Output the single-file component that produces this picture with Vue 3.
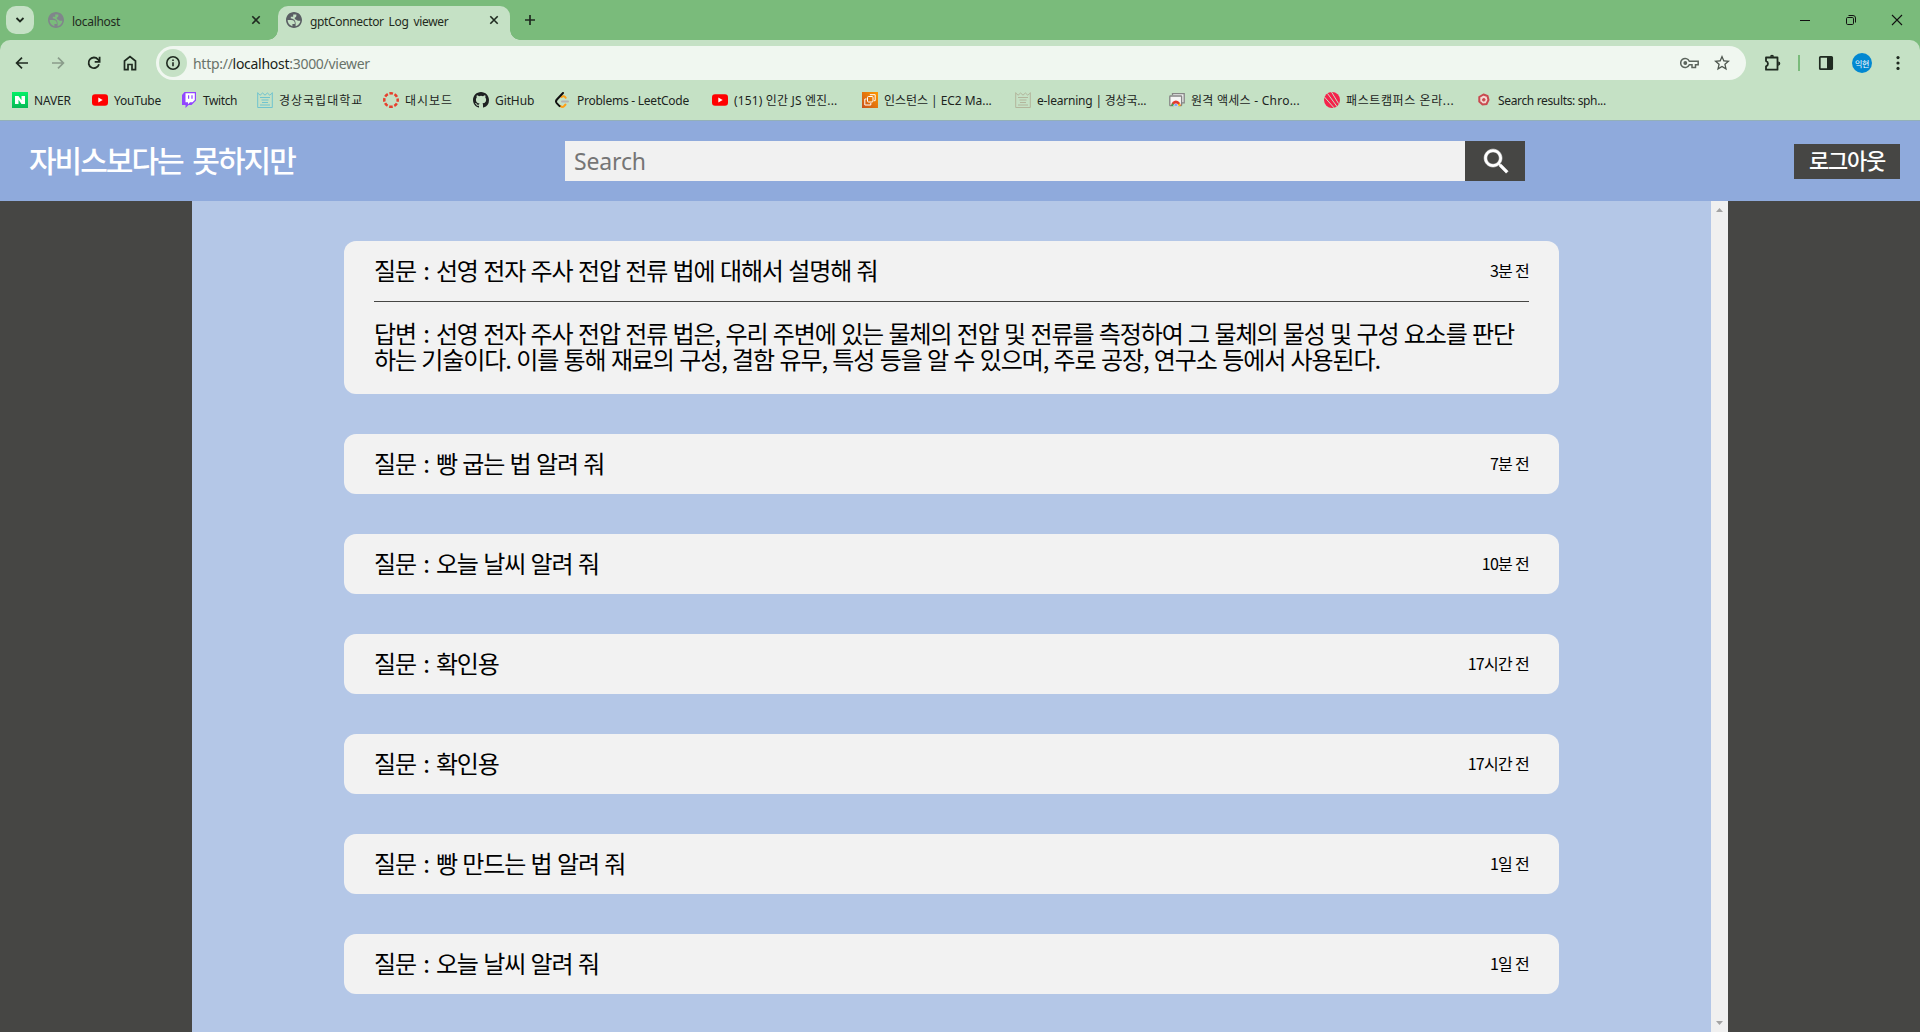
<script setup>
const bookmarks = [
  { icon: 'naver', label: 'NAVER', width: 80, ls: -0.2 },
  { icon: 'youtube', label: 'YouTube', width: 89, ls: -0.2 },
  { icon: 'twitch', label: 'Twitch', width: 76, ls: -0.4 },
  { icon: 'gnu', label: '경상국립대학교', width: 126, ls: 1, color: '#6fc3cf' },
  { icon: 'canvas', label: '대시보드', width: 90, ls: 1 },
  { icon: 'github', label: 'GitHub', width: 82, ls: -0.1 },
  { icon: 'leetcode', label: 'Problems - LeetCode', width: 157, ls: -0.25 },
  { icon: 'youtube', label: '(151) 인간 JS 엔진...', width: 150, ls: 0.15 },
  { icon: 'ec2', label: '인스턴스 | EC2 Ma...', width: 153, ls: -0.05 },
  { icon: 'gnu', label: 'e-learning | 경상국...', width: 154, ls: -0.2, color: '#b3b59c' },
  { icon: 'remote', label: '원격 액세스 - Chro...', width: 155, ls: 0.25 },
  { icon: 'fast', label: '패스트캠퍼스 온라...', width: 152, ls: 0.6 },
  { icon: 'search', label: 'Search results: sph...', width: 150, ls: -0.35 },
]

const logs = [
  {
    question: '선영 전자 주사 전압 전류 법에 대해서 설명해 줘',
    time: '3분 전',
    answer: [
      '선영 전자 주사 전압 전류 법은, 우리 주변에 있는 물체의 전압 및 전류를 측정하여 그 물체의 물성 및 구성 요소를 판단',
      '하는 기술이다. 이를 통해 재료의 구성, 결함 유무, 특성 등을 알 수 있으며, 주로 공장, 연구소 등에서 사용된다.',
    ],
  },
  { question: '빵 굽는 법 알려 줘', time: '7분 전' },
  { question: '오늘 날씨 알려 줘', time: '10분 전' },
  { question: '확인용', time: '17시간 전' },
  { question: '확인용', time: '17시간 전' },
  { question: '빵 만드는 법 알려 줘', time: '1일 전' },
  { question: '오늘 날씨 알려 줘', time: '1일 전' },
]
</script>

<template>
  <div class="window">
    <div class="tabstrip">
      <button class="tab-search">
        <svg width="10" height="10" viewBox="0 0 10 10"><path d="M1.5 3l3.5 3.5L8.5 3" fill="none" stroke="#1f2a20" stroke-width="1.8" /></svg>
      </button>
      <div class="tab first">
        <svg class="favicon" width="16" height="16" viewBox="2 2 20 20"><path fill="#80868b" d="M12 2C6.48 2 2 6.48 2 12s4.480 10 10 10 10-4.480 10-10S17.520 2 12 2zM4 12h4.400c3.400.020 4.900 1.730 4.600 5H10v2.730C6.500 18.800 4 15.700 4 12zm10 7.700V16c0-3-2-6-6-6V8h3V5h4c0 2 0 3.500-2 4v2c2 0 2.500 2 4.500 2H20c-.4 3.400-2.800 6-6 6.700z" /></svg>
        <span class="tab-title">localhost</span>
        <svg class="close" width="10" height="10" viewBox="0 0 10 10"><path d="M1.300 1.300l7.400 7.400M8.700 1.300L1.300 8.700" stroke="#1f2a20" stroke-width="1.600" /></svg>
      </div>
      <div class="tab active">
        <svg class="favicon" width="16" height="16" viewBox="2 2 20 20"><path fill="#5a5f64" d="M12 2C6.480 2 2 6.480 2 12s4.480 10 10 10 10-4.480 10-10S17.520 2 12 2zM4 12h4.400c3.400.020 4.900 1.730 4.600 5H10v2.730C6.500 18.800 4 15.700 4 12zm10 7.700V16c0-3-2-6-6-6V8h3V5h4c0 2 0 3.500-2 4v2c2 0 2.500 2 4.500 2H20c-.4 3.400-2.800 6-6 6.700z" /></svg>
        <span class="tab-title wide">gptConnector Log viewer</span>
        <svg class="close" width="10" height="10" viewBox="0 0 10 10"><path d="M1.300 1.300l7.400 7.400M8.700 1.300L1.300 8.700" stroke="#1f2a20" stroke-width="1.600" /></svg>
      </div>
      <svg class="new-tab" width="12" height="12" viewBox="0 0 12 12"><path d="M6 1v10M1 6h10" stroke="#1f2a20" stroke-width="1.700" /></svg>
      <div class="controls">
        <svg width="12" height="12" viewBox="0 0 12 12"><path d="M1 6.500h10" stroke="#111" /></svg>
        <svg width="12" height="12" viewBox="0 0 12 12" fill="none" stroke="#111"><rect x="1.500" y="3.500" width="7" height="7" rx="1.200" /><path d="M3.500 1.500h4.500a2.500 2.500 0 0 1 2.500 2.500v4.500" /></svg>
        <svg width="12" height="12" viewBox="0 0 12 12"><path d="M1 1l10 10M11 1L1 11" stroke="#111" stroke-width="1.100" /></svg>
      </div>
    </div>

    <div class="toolbar">
      <div class="nav">
        <svg width="14" height="14" viewBox="0 0 14 14" fill="none" stroke="#1f2a20" stroke-width="1.700"><path d="M13 7H2M7 1.600L1.600 7 7 12.400" /></svg>
        <svg width="14" height="14" viewBox="0 0 14 14" fill="none" stroke="#8a9c8b" stroke-width="1.700"><path d="M1 7h11M7 1.600L12.400 7 7 12.400" /></svg>
        <svg width="14" height="14" viewBox="0 0 14 14" fill="none" stroke="#1f2a20" stroke-width="1.800"><path d="M12 8.300A5.300 5.300 0 1 1 10.900 3.300L12.300 5" /><path d="M12.600 .8v5H7.700" /></svg>
        <svg width="14" height="16" viewBox="0 0 14 16" fill="none" stroke="#1f2a20" stroke-width="1.700"><path d="M1.500 6L7 1.600 12.500 6v8.600H9V9.500H5v5.100H1.500z" /></svg>
      </div>
      <div class="omnibox">
        <span class="info">
          <svg width="16" height="16" viewBox="0 0 16 16"><circle cx="8" cy="8" r="6.200" fill="none" stroke="#1f2a20" stroke-width="1.600" /><path d="M8 7.200v4M8 4.400v1.600" stroke="#1f2a20" stroke-width="1.600" /></svg>
        </span>
        <span class="url">http://<b>localhost</b>:3000/viewer</span>
        <svg class="key" width="19" height="12" viewBox="0 0 19 12" fill="none" stroke="#5b645c" stroke-width="1.500"><path d="M9.300 4.200A4.500 4.500 0 1 0 9.300 7.800H12v2.700h3.500V7.800h2.700V4.200z" /><circle cx="5.300" cy="6" r="1.900" fill="#5b645c" stroke="none" /></svg>
        <svg class="star" width="16" height="16" viewBox="2 2 20 20"><path fill="#4d564e" d="M22 9.240l-7.190-.620L12 2 9.190 8.630 2 9.240l5.460 4.730L5.820 21 12 17.270 18.180 21l-1.630-7.030L22 9.240zM12 15.400l-3.760 2.270 1-4.280-3.320-2.880 4.380-.380L12 6.100l1.710 4.040 4.380.380-3.320 2.880 1 4.280L12 15.400z" /></svg>
      </div>
      <svg class="puzzle" width="18" height="18" viewBox="0 0 18 18"><path d="M2 3.500h11.500v12.200H2v-3.400a2.700 2.700 0 0 0 0-5.200z" fill="none" stroke="#1f2a20" stroke-width="1.800" stroke-linejoin="round" /><path d="M6 2.800a2 2 0 0 1 4 0zM14.200 7.500a2.100 2.100 0 0 1 0 4.200z" fill="#1f2a20" /></svg>
      <i class="divider"></i>
      <svg class="side" width="16" height="16" viewBox="0 0 16 16"><rect x="1.800" y="1.800" width="12.400" height="12.400" rx=".8" fill="none" stroke="#1f2a20" stroke-width="1.700" /><path d="M9 2h5v12H9z" fill="#1f2a20" /></svg>
      <span class="avatar">익현</span>
      <svg class="dots" width="4" height="16" viewBox="0 0 4 16" fill="#1f2a20"><circle cx="2" cy="2.600" r="1.600" /><circle cx="2" cy="8" r="1.600" /><circle cx="2" cy="13.400" r="1.600" /></svg>
    </div>

    <div class="bookmarks">
      <div v-for="(b, i) in bookmarks" :key="i" class="bookmark" :style="{ width: b.width + 'px' }">
        <svg width="16" height="16" viewBox="0 0 16 16">
          <template v-if="b.icon === 'naver'"><defs><linearGradient id="nv" x2="0" y2="1"><stop stop-color="#03f067" /><stop offset="1" stop-color="#08b957" /></linearGradient></defs><path fill="url(#nv)" d="M0 0h16v16H0z" /><path fill="#fff" d="M3 4h3.500l3 4.200V4H13v8H9.500l-3-4.200V12H3z" /></template>
          <template v-else-if="b.icon === 'youtube'"><rect y="2.300" width="16" height="11.400" rx="3" fill="#f00" /><path fill="#fff" d="M6.300 5.500L10.700 8l-4.400 2.500z" /></template>
          <template v-else-if="b.icon === 'twitch'"><path fill="#9146ff" d="M3.500 0L1 3v10h3.500v3L7.500 13h3L15 8.500V0z" /><path fill="#fff" d="M4.500 1.200h9.300V8l-2.300 2.300H9L7 12.200v-1.900H4.500z" /><path fill="#9146ff" d="M7 3.300h1.200v3.500H7zM10.400 3.300h1.200v3.500h-1.200z" /></template>
          <g v-else-if="b.icon === 'gnu'" fill="none" :stroke="b.color"><path d="M.7 .5v15h14.600V.5M.7 1l2.400 2.200L5.600 1 8 3.200 10.400 1l2.400 2.200L15.300 1M3 5.500h10M4.500 8h7M5 10.500h6M3 13h10" /></g>
          <circle v-else-if="b.icon === 'canvas'" cx="8" cy="8" r="6.700" fill="none" stroke="#e63f2d" stroke-width="2.500" stroke-dasharray="3.600 1.660" stroke-dashoffset="1.800" />
          <path v-else-if="b.icon === 'github'" fill="#1d2021" d="M8 0C3.580 0 0 3.580 0 8c0 3.540 2.290 6.530 5.470 7.590.4.070.550-.170.550-.380 0-.190-.010-.820-.010-1.490-2.010.370-2.530-.490-2.690-.940-.090-.230-.480-.940-.820-1.130-.280-.150-.680-.520-.010-.530.630-.010 1.080.580 1.230.820.720 1.210 1.870.870 2.330.660.070-.520.280-.870.510-1.070-1.780-.2-3.640-.890-3.640-3.950 0-.870.310-1.590.820-2.150-.080-.2-.360-1.020.080-2.120 0 0 .670-.210 2.200.820a7.600 7.600 0 0 1 4 0c1.530-1.040 2.200-.820 2.200-.820.440 1.100.160 1.920.080 2.120.510.560.820 1.270.820 2.150 0 3.070-1.870 3.750-3.650 3.950.290.250.540.730.540 1.480 0 1.070-.010 1.930-.010 2.200 0 .210.150.460.550.380A8 8 0 0 0 16 8c0-4.420-3.580-8-8-8z" />
          <g v-else-if="b.icon === 'leetcode'" fill="none" stroke-width="2" stroke-linecap="round"><path stroke="#b3b3b3" d="M7 9.500h6" /><path stroke="#ffa116" d="M10.500 12.500l-1.300 1.500c-1.200 1.200-2.500 1.200-3.700 0M6.500 5c1.400-1.200 3-.8 4.200.8" /><path stroke="#111" d="M8 1L1.900 7.500c-1 1.100-1 2.800 0 3.900l2.700 2.700" /></g>
          <template v-else-if="b.icon === 'ec2'"><defs><linearGradient id="aw" x1="0" y1="1" x2="1" y2="0"><stop stop-color="#c8511b" /><stop offset="1" stop-color="#f90" /></linearGradient></defs><path fill="url(#aw)" d="M0 0h16v16H0z" /><g fill="none" stroke="#fff"><rect x="5.500" y="4.500" width="5.500" height="5.500" rx="1" /><path d="M8 3V2.700h5.200v6H12M4.500 7H2.800v6h6v-2" /></g></template>
          <template v-else-if="b.icon === 'remote'"><path d="M3.500 3V1.600h11.700v9.200H13" fill="#eee" stroke="#858585" stroke-width="1.300" /><rect x=".8" y="4" width="11.800" height="9.600" rx=".6" fill="#f5f5f5" stroke="#858585" stroke-width="1.300" /><path fill="#e33b2e" d="M2.200 14a4.600 5.500 0 0 1 9.400 0z" /><path fill="#38a853" d="M2.200 14l.9-3 2.900 3z" /><path fill="#fbbc05" d="M8 14l2.800-3 .8 3z" /><path d="M4.700 14a2.200 2.200 0 0 1 4.400 0z" fill="#4285f4" stroke="#fff" stroke-width=".7" /></template>
          <template v-else-if="b.icon === 'fast'"><circle cx="8" cy="8" r="8" fill="#f5224b" /><path d="M0 4.500L10 15.800M3.500 1.500L13 14.500M7.500 0l7 11.500" stroke="#c5e1c5" stroke-width="1" /></template>
          <g v-else fill="none" stroke="#c94a50"><path fill="#f4d9d3" stroke-width="2" d="M7.500 2.500l4 1.500 1 4-2 4-4 .5L3.300 9.500V5z" /><circle cx="7.800" cy="7.800" r="1.300" fill="#c94a50" /></g>
        </svg>
        <span :style="{ letterSpacing: b.ls + 'px' }">{{ b.label }}</span>
      </div>
    </div>

    <header class="header">
      <h1 class="brand">자비스보다는 못하지만</h1>
      <div class="search">
        <input class="search-input" placeholder="Search" />
        <button class="search-button">
          <svg width="33" height="33" viewBox="0 0 24 24"><path fill="#fff" d="M15.500 14h-.79l-.28-.27C15.410 12.590 16 11.110 16 9.500 16 5.910 13.090 3 9.500 3S3 5.910 3 9.500 5.910 16 9.500 16c1.610 0 3.090-.590 4.230-1.570l.27.280v.790l5 4.990L20.490 19l-4.990-5zm-6 0C7.010 14 5 11.990 5 9.500S7.010 5 9.500 5 14 7.010 14 9.500 11.990 14 9.500 14z" stroke="#fff" stroke-width=".4" /></svg>
        </button>
      </div>
      <button class="logout">로그아웃</button>
    </header>

    <main class="body">
      <section class="list">
        <article v-for="(log, i) in logs" :key="i" class="card">
          <div class="row">
            <span><span class="label">질문 : </span>{{ log.question }}</span>
            <time>{{ log.time }}</time>
          </div>
          <p v-if="log.answer" class="answer"><span class="label">답변 : </span>{{ log.answer[0] }}<br />{{ log.answer[1] }}</p>
        </article>
      </section>
      <div class="scrollbar">
        <svg width="7" height="4" viewBox="0 0 7 4"><path fill="#a3a3a3" d="M3.500 0L7 4H0z" /></svg>
        <svg width="7" height="4" viewBox="0 0 7 4"><path fill="#a3a3a3" d="M3.500 4L7 0H0z" /></svg>
      </div>
    </main>
  </div>
</template>

<style>
body { margin: 0; overflow: hidden; }
</style>

<style scoped>
* { box-sizing: border-box; }
svg { display: block; flex: none; }
button { border: 0; padding: 0; font-family: inherit; }
.window { display: flex; flex-direction: column; width: 1920px; height: 1032px; overflow: hidden; background: #7abb7b; font-family: "Noto Sans", "Noto Sans CJK KR", sans-serif; white-space: nowrap; }

.tabstrip { display: flex; height: 40px; flex: none; padding-left: 6px; color: #1f2a20; }
.tab-search { display: grid; place-items: center; width: 28px; height: 28px; margin-top: 6px; border-radius: 10px; background: #c5e1c5; }
.tab { display: flex; align-items: center; height: 34px; margin-top: 6px; padding-bottom: 6px; }
.tab.first { width: 244px; padding-left: 14px; padding-right: 17px; }
.tab.active { position: relative; width: 232px; padding-left: 8px; padding-right: 11px; border-radius: 10px 10px 0 0; background: #c5e1c5; }
.tab.active::before, .tab.active::after { content: ""; position: absolute; bottom: 0; width: 10px; height: 10px; }
.tab.active::before { left: -10px; background: radial-gradient(circle at 0 0, transparent 9.500px, #c5e1c5 10px); }
.tab.active::after { right: -10px; background: radial-gradient(circle at 100% 0, transparent 9.500px, #c5e1c5 10px); }
.tab-title { margin-left: 8px; padding-top: 2px; font-size: 12px; letter-spacing: -0.3px; }
.tab-title.wide { letter-spacing: -0.35px; word-spacing: 2.2px; }
.close { margin-left: auto; }
.new-tab { margin: 14px 0 0 14px; }
.controls { display: flex; gap: 34px; margin: 14px 17px 0 auto; }

.toolbar { display: flex; align-items: center; height: 46px; flex: none; padding-left: 4px; border-radius: 10px 10px 0 0; background: #c5e1c5; }
.nav { display: flex; width: 152px; }
.nav svg { margin: 0 11px; align-self: center; }
.omnibox { display: flex; align-items: center; width: 1590px; height: 34px; padding: 0 16px 0 3px; border-radius: 17px; background: #f0f7f0; }
.info { display: grid; place-items: center; width: 28px; height: 28px; border-radius: 50%; background: #c5e1c5; }
.url { margin-left: 6px; font-size: 14px; letter-spacing: -0.28px; color: #69736a; }
.url b { font-weight: 400; color: #1a1f1a; }
.key { margin-left: auto; }
.star { margin-left: 15px; }
.puzzle { margin-left: 18px; }
.divider { width: 2px; height: 16px; margin-left: 16px; background: #7abb7b; }
.side { margin-left: 18px; }
.avatar { display: grid; place-items: center; width: 20px; height: 20px; margin-left: 18px; border-radius: 50%; background: #0288d1; color: #fff; font-size: 8px; letter-spacing: -0.3px; }
.dots { margin-left: 24px; }

.bookmarks { display: flex; align-items: center; height: 34px; flex: none; padding: 0 0 6px 12px; background: #c5e1c5; }
.bookmark { display: flex; flex: none; align-items: center; gap: 6px; font-size: 12px; color: #1c241d; }

.header { display: flex; align-items: center; height: 81px; flex: none; background: #8faadc; box-shadow: inset 0 1px #93b0b8; color: #fff; }
.brand { width: 536px; margin: 0 0 4px 29px; font-family: "Noto Sans CJK KR", sans-serif; font-size: 30px; font-weight: 500; letter-spacing: -2px; word-spacing: 5px; }
.search { display: flex; width: 960px; height: 40px; }
.search-input { width: 900px; border: 0; padding: 0 9px; background: #f1f1f1; font: 23px "Noto Sans", sans-serif; letter-spacing: -0.15px; }
.search-input::placeholder { color: #757575; opacity: 1; }
.search-button { display: grid; place-items: center; width: 60px; padding: 2px 0 0 2px; background: #464644; }
.logout { width: 106px; height: 35px; margin: 1px 20px 0 auto; background: #464644; color: #fff; font: 500 22px/31px "Noto Sans CJK KR", sans-serif; letter-spacing: -1.200px; padding-bottom: 4px; }

.body { display: flex; justify-content: center; flex: 1; background: #464644; font-family: "Noto Sans CJK KR", sans-serif; color: #000; }
.list { display: flex; flex-direction: column; align-items: center; gap: 40px; width: 1519px; padding-top: 40px; background: #b4c7e7; }
.card { width: 1215px; padding: 0 30px; border-radius: 12px; background: #f2f2f2; }
.row { display: flex; align-items: center; justify-content: space-between; height: 60px; padding-bottom: 4px; font-size: 24px; letter-spacing: -1.100px; word-spacing: 1.100px; }
.label { word-spacing: 2.900px; }
.row time { padding-top: 2px; font-size: 16px; letter-spacing: -0.700px; word-spacing: 0; }
.answer { height: 93px; margin: 0; padding-top: 18px; border-top: 1px solid #464644; font-size: 24px; line-height: 26px; letter-spacing: -1.100px; word-spacing: 1.100px; }
.scrollbar { display: flex; flex-direction: column; align-items: center; justify-content: space-between; width: 17px; padding: 7px 0; background: #f0f0f0; }
</style>
